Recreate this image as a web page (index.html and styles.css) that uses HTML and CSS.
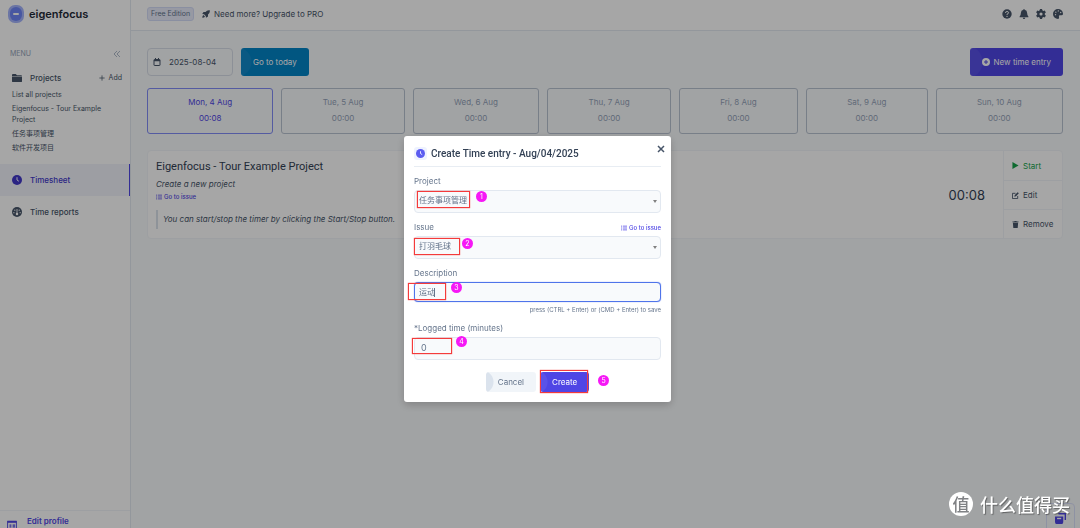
FILE: index.html
```html
<!DOCTYPE html>
<html lang="en">
<head>
    <meta charset="UTF-8">
    <meta name="viewport" content="width=device-width, initial-scale=1.0">
    <title>Eigenfocus - Timesheet</title>
    <link rel="stylesheet" href="styles.css">
</head>
<body>

    <div class="app">
        <aside class="sidebar">
            <a class="brand" href="#">
                <svg class="logo" viewBox="0 0 16 18">
                    <rect width="16" height="18" rx="7" fill="#a5b4fc"/>
                    <rect x="2" y="2" width="12" height="14" rx="6" fill="#6f86f7"/>
                    <rect x="5" y="8" width="6" height="2" rx="1" fill="#fff"/>
                </svg>
                eigenfocus
            </a>
            <div class="menu-head">
                <span>MENU</span>
                <svg class="icon" viewBox="0 0 16 16" fill="none" stroke="currentColor" stroke-width="1.5"><path d="M8 2 2 8l6 6M14 2 8 8l6 6"/></svg>
            </div>
            <nav>
                <div class="projects-head">
                    <a class="nav-link" href="#">
                        <svg class="nav-icon" viewBox="0 0 16 16" fill="currentColor"><path d="M0 3q0-1.500 1.500-1.500H6l2 2h6.500Q16 3.500 16 5H0zM0 6h16v7q0 1.500-1.500 1.500h-13Q0 14.500 0 13z"/></svg>
                        Projects
                    </a>
                    <a class="add" href="#">
                        <svg viewBox="0 0 16 16" fill="none" stroke="currentColor" stroke-width="2"><path d="M8 1v14M1 8h14"/></svg>
                        Add
                    </a>
                </div>
                <ul class="project-list">
                    <li><a href="#">List all projects</a></li>
                    <li><a href="#">Eigenfocus - Tour Example Project</a></li>
                    <li><a href="#">任务事项管理</a></li>
                    <li><a href="#">软件开发项目</a></li>
                </ul>
                <a class="nav-link nav-row active" href="#">
                    <svg class="nav-icon" viewBox="0 0 16 16"><circle cx="8" cy="8" r="8" fill="currentColor"/><path d="M8 3.500V8l3 2" fill="none" stroke="#fff" stroke-width="1.500"/></svg>
                    Timesheet
                </a>
                <a class="nav-link nav-row" href="#">
                    <svg class="nav-icon" viewBox="0 0 16 16"><circle cx="8" cy="8" r="8" fill="currentColor"/><g fill="#fff"><path d="M7.300 3h1.400v6.500H7.300z"/><circle cx="8" cy="11" r="2"/><circle cx="4.500" cy="5" r="1"/><circle cx="11.500" cy="5" r="1"/><circle cx="3" cy="9" r="1"/><circle cx="13" cy="9" r="1"/></g></svg>
                    Time reports
                </a>
            </nav>
            <a class="profile" href="#">
                <svg viewBox="0 0 16 16" fill="none" stroke="currentColor" stroke-width="1.500"><rect x="1" y="2" width="14" height="12"/><path d="M1 3h14" stroke-width="3"/><path d="M4 8h3M4 11h3M9 8h4M9 11h4" stroke-width="2"/></svg>
                Edit profile
            </a>
        </aside>

        <div class="content">
            <header class="topbar">
                <span class="edition">Free Edition</span>
                <a class="upgrade" href="#">
                    <svg viewBox="0 0 16 16"><path fill="currentColor" d="M15.500.500Q10-.500 7 4H3L.500 8 4 8.500 7.500 12l.500 3.500 4-2.500V9q4.500-3 3.500-8.500zM3 10q-2.500 1-2.500 5.500Q5 15.500 6 13z"/></svg>
                    Need more? Upgrade to PRO
                </a>
                <div class="tools">
                    <button type="button" aria-label="Help">
                        <svg viewBox="0 0 16 16"><circle cx="8" cy="8" r="7.500" fill="currentColor"/><path d="M5.500 6.300q0-2.300 2.500-2.300t2.500 2Q10.500 7.500 8 8.300v1.200" fill="none" stroke="#fff" stroke-width="1.500"/><circle cx="8" cy="11.800" r="1" fill="#fff"/></svg>
                    </button>
                    <button type="button" aria-label="Notifications">
                        <svg viewBox="0 0 16 16" fill="currentColor"><path d="M8 0q1 0 1 1.200 4 .8 4 5.300 0 3.500 2 5.500v1H1v-1q2-2 2-5.500 0-4.500 4-5.300Q7 0 8 0zM6 14h4q0 2-2 2t-2-2z"/></svg>
                    </button>
                    <button type="button" aria-label="Settings">
                        <svg viewBox="0 0 16 16"><g fill="currentColor"><circle cx="8" cy="8" r="6"/><path d="M6.300 0h3.400l.6 4H5.700zM6.300 16h3.400l.6-4H5.700z"/><path d="M6.300 0h3.400l.6 4H5.700zM6.300 16h3.400l.6-4H5.700z" transform="rotate(60 8 8)"/><path d="M6.300 0h3.400l.6 4H5.700zM6.300 16h3.400l.6-4H5.700z" transform="rotate(120 8 8)"/></g><circle cx="8" cy="8" r="2.500" fill="#fff"/></svg>
                    </button>
                    <button type="button" aria-label="Theme">
                        <svg viewBox="0 0 16 16"><path fill="currentColor" d="M8 0a8 8 0 0 1 8 7.500Q16 10 13.500 10H11q-2 0-1.500 2t-.5 3.500q-.500.5-1 .5A8 8 0 0 1 8 0z"/><g fill="#fff"><circle cx="4" cy="9" r="1.100"/><circle cx="4.500" cy="5" r="1.100"/><circle cx="8.500" cy="3" r="1.100"/><circle cx="12.300" cy="5.500" r="1.100"/></g></svg>
                    </button>
                </div>
            </header>

            <main>
                <div class="toolbar">
                    <label class="date-box">
                        <svg viewBox="0 0 16 16" fill="none" stroke="currentColor" stroke-width="2"><rect x="2" y="3" width="12" height="12" rx="1"/><path d="M2 5h12" stroke-width="3"/><path d="M5 0v4M11 0v4"/></svg>
                        <input type="text" value="2025-08-04" aria-label="Date">
                    </label>
                    <button class="btn today" type="button">Go to today</button>
                    <button class="btn primary new-entry" type="button">
                        <svg viewBox="0 0 16 16"><circle cx="8" cy="8" r="8" fill="#fff"/><path d="M8 4v8M4 8h8" stroke="#4f46e5" stroke-width="2"/></svg>
                        New time entry
                    </button>
                </div>

                <div class="days">
                    <a class="day selected" href="#"><span>Mon, 4 Aug</span><b>00:08</b></a>
                    <a class="day" href="#"><span>Tue, 5 Aug</span><b>00:00</b></a>
                    <a class="day" href="#"><span>Wed, 6 Aug</span><b>00:00</b></a>
                    <a class="day" href="#"><span>Thu, 7 Aug</span><b>00:00</b></a>
                    <a class="day" href="#"><span>Fri, 8 Aug</span><b>00:00</b></a>
                    <a class="day" href="#"><span>Sat, 9 Aug</span><b>00:00</b></a>
                    <a class="day" href="#"><span>Sun, 10 Aug</span><b>00:00</b></a>
                </div>

                <article class="entry">
                    <div class="entry-info">
                        <h2>Eigenfocus - Tour Example Project</h2>
                        <p class="entry-issue">Create a new project</p>
                        <a class="issue-link" href="#">
                            <svg viewBox="0 0 16 16" stroke="currentColor" stroke-width="2"><path d="M0 3h3M5 3h11M0 8h3M5 8h11M0 13h3M5 13h11"/></svg>
                            Go to issue
                        </a>
                        <blockquote>You can start/stop the timer by clicking the Start/Stop button.</blockquote>
                    </div>
                    <div class="entry-time">00:08</div>
                    <div class="entry-actions">
                        <button class="start" type="button">
                            <svg viewBox="0 0 16 16" fill="currentColor"><path d="M1 0 15 8 1 16z"/></svg>
                            Start
                        </button>
                        <button type="button">
                            <svg viewBox="0 0 16 16" fill="none" stroke="currentColor" stroke-width="2"><path d="M8 3H1v12h12V9"/><path d="m6 10 1-3 6-6 2 2-6 6z" fill="currentColor" stroke-width="1"/></svg>
                            Edit
                        </button>
                        <button type="button">
                            <svg viewBox="0 0 16 16" fill="currentColor"><path d="M1 1h4l1-1h4l1 1h4v2H1zM2 4h12l-1 12H3z"/></svg>
                            Remove
                        </button>
                    </div>
                </article>
            </main>
        </div>
    </div>

    <button class="notes" type="button" aria-label="Notes">
        <svg viewBox="0 0 16 16"><path d="M5 1h10v9" fill="none" stroke="currentColor" stroke-width="2"/><path d="M0 5h12v8q0 3-2 3H2q-2 0-2-3z" fill="currentColor"/><path d="M3 8h6" stroke="#fff" stroke-width="2"/></svg>
    </button>

    <div class="backdrop">
        <form class="modal" role="dialog" aria-labelledby="modalTitle">
            <button class="close" type="button" aria-label="Close">
                <svg viewBox="0 0 16 16" fill="none" stroke="currentColor" stroke-width="3"><path d="m2 2 12 12M14 2 2 14"/></svg>
            </button>
            <div class="modal-head">
                <span class="modal-icon">
                    <svg viewBox="0 0 16 16"><circle cx="8" cy="8" r="8" fill="currentColor"/><path d="M8 4v4l3 2" fill="none" stroke="#fff" stroke-width="1.500"/></svg>
                </span>
                <h1 id="modalTitle">Create Time entry - Aug/04/2025</h1>
            </div>

            <div class="field">
                <label for="project">Project</label>
                <div class="select-wrap">
                    <select id="project"><option>任务事项管理</option></select>
                    <i class="mark mark-project"></i>
                    <span class="step step-project">1</span>
                </div>
            </div>

            <div class="field">
                <div class="label-row">
                    <label for="issue">Issue</label>
                    <a class="issue-link" href="#">
                        <svg viewBox="0 0 16 16" stroke="currentColor" stroke-width="2"><path d="M0 3h3M5 3h11M0 8h3M5 8h11M0 13h3M5 13h11"/></svg>
                        Go to issue
                    </a>
                </div>
                <div class="select-wrap">
                    <select id="issue"><option>打羽毛球</option></select>
                    <i class="mark mark-issue"></i>
                    <span class="step step-issue">2</span>
                </div>
            </div>

            <div class="field">
                <label for="description">Description</label>
                <div class="input-wrap">
                    <textarea id="description" class="focused" rows="1">运动</textarea>
                    <i class="caret"></i>
                    <i class="mark mark-description"></i>
                    <span class="step step-description">3</span>
                </div>
                <p class="hint">press (CTRL + Enter) or (CMD + Enter) to save</p>
            </div>

            <div class="field">
                <label for="minutes">*Logged time (minutes)</label>
                <div class="input-wrap">
                    <input id="minutes" type="text" inputmode="numeric" value="0">
                    <i class="mark mark-minutes"></i>
                    <span class="step step-minutes">4</span>
                </div>
            </div>

            <div class="modal-actions">
                <button class="btn cancel" type="button">Cancel</button>
                <div class="create-wrap">
                    <button class="btn primary create" type="submit">Create</button>
                    <i class="mark mark-create"></i>
                    <span class="step step-create">5</span>
                </div>
            </div>
        </form>
    </div>

    <div class="watermark">
        <span class="seal">值</span>
        什么值得买
    </div>

</body>
</html>
```

FILE: styles.css
```css
* {
    box-sizing: border-box;
}
body {
    margin: 0;
    font-family: Inter, "Noto Sans CJK SC", sans-serif;
    font-size: 8px;
    line-height: 12px;
    color: #475569;
    background-color: #f8fafc;
}
a {
    color: inherit;
    text-decoration: none;
}
button, input, select, textarea {
    font: inherit;
    color: inherit;
}
button {
    padding: 0;
    border: none;
    background: none;
    cursor: pointer;
}
svg {
    display: block;
    flex: none;
    width: 8px;
    height: 8px;
}
h1, h2, p, ul, blockquote {
    margin: 0;
}

/* Layout */
.app {
    display: flex;
    height: 100vh;
    overflow: hidden;
}
.content {
    flex: 1;
    min-width: 0;
}

/* Sidebar */
.sidebar {
    display: flex;
    flex-direction: column;
    flex: none;
    width: 131px;
    background-color: white;
    border-right: 1px solid #e2e8f0;
}
.brand {
    display: flex;
    align-items: center;
    gap: 5px;
    padding: 5px 8px;
    font-size: 11px;
    line-height: 18px;
    font-weight: 600;
    color: #1f2937;
}
.logo {
    width: 16px;
    height: 18px;
}
.menu-head {
    display: flex;
    justify-content: space-between;
    align-items: center;
    padding: 20px 9px 0 10px;
    font-size: 7px;
    color: #94a3b8;
}
.projects-head {
    display: flex;
    justify-content: space-between;
    align-items: center;
    padding: 12px 8px 5px 12px;
}
.nav-link {
    display: flex;
    align-items: center;
    gap: 8px;
    font-weight: 500;
}
.nav-icon {
    width: 10px;
    height: 10px;
}
.add {
    display: flex;
    align-items: center;
    gap: 4px;
    font-size: 7px;
}
.add svg {
    width: 6px;
    height: 6px;
}
.project-list {
    display: flex;
    flex-direction: column;
    gap: 3px;
    padding: 0 12px 0 12px;
    list-style: none;
    font-size: 7px;
    line-height: 11px;
}
.nav-row {
    height: 32px;
    padding-left: 12px;
}
.nav-row.active {
    margin-top: 11px;
    color: #4338ca;
    background-color: #f1f3fb;
    border-right: 1px solid #4f46e5;
}
.profile {
    display: flex;
    gap: 10px;
    height: 18px;
    margin-top: auto;
    padding: 4px 7px 0 7px;
    border-top: 1px solid #f1f5f9;
    font-weight: 600;
    color: #4f46e5;
    overflow: hidden;
}
.profile svg {
    width: 10px;
    height: 10px;
    margin-top: 5px;
}

/* Top bar */
.topbar {
    display: flex;
    align-items: center;
    gap: 8px;
    height: 31px;
    padding: 0 17px 3px 16px;
    background-color: white;
    border-bottom: 1px solid #e2e8f0;
}
.edition {
    padding: 0 3px;
    border: 1px solid #d5dcf8;
    border-radius: 3px;
    background-color: #e8ecfb;
    font-size: 7px;
    color: #64748b;
}
.upgrade {
    display: flex;
    align-items: center;
    gap: 4px;
}
.tools {
    display: flex;
    gap: 7px;
    margin-left: auto;
}
.tools svg {
    width: 10px;
    height: 10px;
}

/* Timesheet */
main {
    padding: 17px 17px 0 16px;
}
.toolbar {
    display: flex;
    gap: 8px;
    height: 28px;
}
.date-box {
    display: flex;
    align-items: center;
    gap: 8px;
    width: 86px;
    padding: 0 5px;
    border: 1px solid #d8dee8;
    border-radius: 4px;
}
.date-box input {
    min-width: 0;
    padding: 0;
    border: none;
    background: none;
}
.btn {
    padding: 0 12px;
    border-radius: 3px;
    color: white;
}
.today {
    background: radial-gradient(circle at -4px 50%, #1189c9 14px, #0284c7 15px);
}
.primary {
    background: radial-gradient(circle at -4px 50%, #5850e7 16px, #4f46e5 17px);
}
.new-entry {
    display: flex;
    align-items: center;
    gap: 4px;
    margin-left: auto;
}
.days {
    display: flex;
    gap: 8px;
    margin-top: 12px;
}
.day {
    flex: 1 1 auto;
    padding: 5px 0 7px;
    border: 1px solid #b9c3d2;
    border-radius: 3px;
    line-height: 16px;
    text-align: center;
    color: #94a3b8;
}
.day span, .day b {
    display: block;
    font-weight: 400;
}
.day.selected {
    border-color: #818cf8;
    color: #4f46e5;
}
.entry {
    display: flex;
    margin-top: 16px;
    border: 1px solid #f1f5f9;
    border-radius: 4px;
    background-color: white;
}
.entry-info {
    flex: 1;
    padding: 8px;
}
.entry h2 {
    font-family: Roboto, sans-serif;
    font-size: 11px;
    line-height: 16px;
    font-weight: 400;
    color: #334155;
}
.entry-issue {
    margin-top: 3px;
    font-style: italic;
}
.issue-link {
    display: flex;
    align-items: center;
    gap: 2px;
    font-size: 6px;
    font-weight: 500;
    color: #4f46e5;
}
.issue-link svg {
    width: 6px;
    height: 6px;
}
.entry-info .issue-link {
    margin-top: 1px;
}
blockquote {
    margin-top: 7px;
    padding: 3px 5px;
    border-left: 2px solid #dbe2ec;
    line-height: 13px;
    font-style: italic;
}
.entry-time {
    align-self: center;
    padding-right: 18px;
    font-size: 13px;
    color: #334155;
}
.entry-actions {
    display: flex;
    flex-direction: column;
    width: 59px;
    border-left: 1px solid #f1f5f9;
}
.entry-actions button {
    display: flex;
    align-items: center;
    gap: 4px;
    height: 29px;
    padding-left: 8px;
}
.entry-actions button + button {
    border-top: 1px solid #f1f5f9;
}
.entry-actions svg {
    width: 7px;
    height: 7px;
}
.entry-actions .start {
    color: #16a34a;
}
.notes {
    position: fixed;
    right: 5px;
    bottom: -5px;
    display: grid;
    place-items: center;
    width: 29px;
    height: 30px;
    border: 1px solid #dbe0fa;
    border-radius: 4px;
    color: #4f46e5;
}
.notes svg {
    width: 11px;
    height: 11px;
}

/* Modal */
.backdrop {
    position: fixed;
    inset: 0;
    display: flex;
    align-items: center;
    justify-content: center;
    padding: 9px 5px 0 0;
    background-color: rgba(0, 0, 0, 0.35);
}
.modal {
    position: relative;
    width: 267px;
    padding: 10px;
    border-radius: 3px;
    background-color: white;
    box-shadow: 0 3px 8px rgba(0, 0, 0, 0.2);
    color: #64748b;
}
.modal-head {
    display: flex;
    align-items: center;
    gap: 4px;
    padding-bottom: 4px;
    border-bottom: 1px solid #e8edf3;
}
.modal-icon {
    padding: 2px;
    border-radius: 3px;
    background-color: #eef2ff;
    color: #5b5cf0;
}
.modal-icon svg {
    width: 9px;
    height: 9px;
}
.modal h1 {
    font-family: Roboto, sans-serif;
    font-size: 10px;
    line-height: 16px;
    font-weight: 500;
    color: #334155;
}
.close {
    position: absolute;
    top: 9px;
    right: 6px;
    color: #475569;
}
.field {
    margin-top: 8px;
}
.field label {
    display: block;
    margin-bottom: 3px;
}
.label-row {
    display: flex;
    justify-content: space-between;
}
.select-wrap, .input-wrap, .create-wrap {
    position: relative;
}
.field select, .field input, .field textarea {
    display: block;
    width: 100%;
    height: 23px;
    padding: 0 4px 2px;
    border: 1px solid #e2e8f0;
    border-radius: 4px;
    outline: none;
    background-color: #f8fafc;
    appearance: none;
    resize: none;
}
.field input {
    padding-left: 6px;
    font-size: 9px;
}
.select-wrap::after {
    content: "";
    position: absolute;
    top: 10px;
    right: 4px;
    border: 2px solid transparent;
    border-top: 3px solid #808080;
}
.field .focused {
    height: 20px;
    padding: 3px 4px;
    border: 1px solid #4f74ea;
    box-shadow: 0 0 1px #4f74ea;
    overflow: hidden;
}
.caret {
    position: absolute;
    top: 6px;
    left: 20px;
    width: 1px;
    height: 9px;
    background-color: #64748b;
}
.hint {
    margin-top: 3px;
    font-size: 6px;
    line-height: 9px;
    text-align: right;
}
.modal-actions {
    display: flex;
    justify-content: center;
    gap: 4px;
    margin-top: 12px;
}
.modal-actions .btn {
    height: 20px;
}
.cancel {
    background: radial-gradient(circle at -4px 50%, #dbe3ed 11px, #f1f5f9 12px);
    color: #64748b;
}
.create {
    background: radial-gradient(circle at -4px 50%, #5b52e8 11px, #4f46e5 12px);
}

/* Numbered steps over the form */
.mark {
    position: absolute;
    border: 1px solid #f43b3b;
    box-shadow: 0 0 1px #f43b3b;
}
.step {
    position: absolute;
    width: 11px;
    height: 11px;
    border-radius: 50%;
    background-color: #f618f6;
    color: white;
    font-size: 7px;
    line-height: 11px;
    text-align: center;
}
.mark-project {
    top: 1px;
    left: 3px;
    width: 53px;
    height: 17px;
}
.step-project {
    top: 1px;
    left: 62px;
}
.mark-issue {
    top: 2px;
    left: 0;
    width: 46px;
    height: 17px;
}
.step-issue {
    top: 2px;
    left: 48px;
}
.mark-description {
    top: 1px;
    left: -6px;
    width: 38px;
    height: 17px;
}
.step-description {
    top: 0;
    left: 37px;
}
.mark-minutes {
    top: 1px;
    left: -2px;
    width: 40px;
    height: 16px;
}
.step-minutes {
    top: -1px;
    left: 42px;
}
.mark-create {
    inset: -2px 1px -1px 0;
}
.step-create {
    top: 3px;
    right: -20px;
}

.watermark {
    position: fixed;
    right: 10px;
    bottom: 11px;
    display: flex;
    align-items: center;
    gap: 7px;
    font-family: "Noto Sans CJK SC", sans-serif;
    font-size: 18px;
    font-weight: 500;
    line-height: 26px;
    color: white;
    text-shadow: 1px 1px 1px rgba(0, 0, 0, 0.4);
}
.seal {
    width: 24px;
    height: 24px;
    border-radius: 50%;
    background-color: white;
    color: #808285;
    font-size: 17px;
    line-height: 23px;
    text-align: center;
    text-shadow: none;
}
```
